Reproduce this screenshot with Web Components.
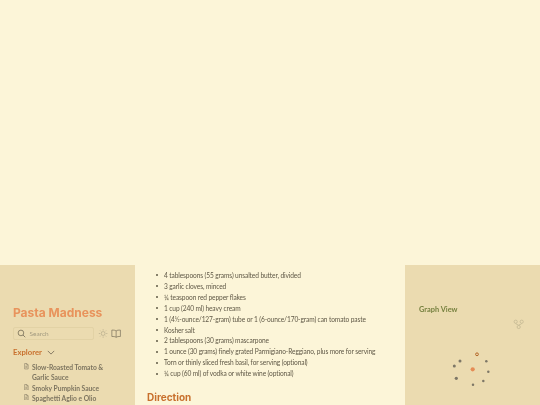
<!DOCTYPE html>
<html lang="en"><head><meta charset="utf-8"><title>Pasta Madness</title>
<style>html,body{margin:0;padding:0;background:#fcf5d8;overflow:hidden;height:405px}</style></head>
<body>
<quartz-page>
  <quartz-left slot="left"></quartz-left>
  <quartz-article slot="center"></quartz-article>
  <quartz-right slot="right"></quartz-right>
</quartz-page>
<script>
const def=(n,html)=>customElements.define(n,class extends HTMLElement{constructor(){super();this.attachShadow({mode:'open'}).innerHTML=html}});
def('quartz-page',`<style>:host{display:block;height:405px;overflow:hidden;background:#fcf5d8;font-family:"Lato","Liberation Sans",sans-serif}
.wrap{padding-top:265px;height:140px}.g{display:grid;grid-template-columns:135px 270px 135px;height:140px;filter:blur(.3px)}</style>
<div class="wrap"><div class="g"><slot name="left"></slot><slot name="center"></slot><slot name="right"></slot></div></div>`);
const file=`<svg viewBox="0 0 24 24" width="6.500" height="6.500" fill="none" stroke="#7c745f" stroke-width="2"><path d="M6 2h8l5 5v15H6z"/><path d="M14 2v5h5M9 12h7M9 16h7"/></svg>`;
def('quartz-left',`<style>:host{display:block;background:#ebdbb0;height:140px;overflow:hidden;box-sizing:border-box;padding:41px 14px 0 13px}
h1{margin:0;font:700 12px/14px "Inter","Liberation Sans",sans-serif;color:#e8935c}
.s{display:flex;align-items:center;margin-top:7px}
.box{flex:none;display:flex;align-items:center;gap:3.500px;width:81px;height:13px;box-sizing:border-box;border:1px solid #e2d2a5;border-radius:2px;padding-left:3px;font-size:6.500px;color:#a29a80}
.sun{margin-left:3.500px}.book{margin-left:3px}
h2{display:flex;align-items:center;gap:5px;margin:6px 0 0;font:700 7.700px/12px "Lato",sans-serif;color:#c8702d}
ul{list-style:none;margin:4px 0 0;padding:0 0 0 10px}
li{display:flex;gap:2.500px;font-size:6.700px;font-weight:700;line-height:10.300px;color:#7c745f}
li span{width:80px}
li svg{flex:none;margin-top:1px}</style>
<h1>Pasta Madness</h1>
<div class="s"><div class="box"><svg viewBox="0 0 24 24" width="9" height="9" fill="none" stroke="#5f5846" stroke-width="1.800"><circle cx="10.500" cy="10.500" r="7.500"/><path d="M16 16l6 6"/></svg>Search</div>
<svg class="sun" viewBox="0 0 24 24" width="11" height="11" fill="none" stroke="#a89f83" stroke-width="1.300"><circle cx="12" cy="12" r="4.500"/><path d="M12 2v3M12 19v3M2 12h3M19 12h3M5 5l2 2M17 17l2 2M5 19l2-2M17 7l2-2"/></svg>
<svg class="book" viewBox="0 0 24 24" width="11" height="11" fill="none" stroke="#6d6553" stroke-width="1.500"><path d="M12 6C10 4 6 4 2 4v15c4 0 8 0 10 2 2-2 6-2 10-2V4c-4 0-8 0-10 2zM12 6v15"/></svg></div>
<h2>Explorer <svg viewBox="0 0 10 6" width="8" height="5" fill="none" stroke="#6d6553" stroke-width="1"><path d="M1 1l4 4 4-4"/></svg></h2>
<ul><li>${file}<span>Slow-Roasted Tomato &amp; Garlic Sauce</span></li><li>${file}<span>Smoky Pumpkin Sauce</span></li><li>${file}<span>Spaghetti Aglio e Olio</span></li></ul>`);
def('quartz-article',`<style>:host{display:block;background:#fcf5d8;height:140px;overflow:hidden;box-sizing:border-box;padding:5px 12px 0}
ul{list-style:none;margin:0;padding:0 0 0 9px;font-size:6.600px;letter-spacing:-.11px;line-height:10.900px;color:#5f5846;white-space:nowrap}
li{display:flex;align-items:center;gap:6px}
li::before{content:"";flex:none;width:2px;height:2px;border-radius:50%;background:#5f5846}
h2{margin:12px 0 0;font:700 10px/13px "Inter","Liberation Sans",sans-serif;color:#c8702d}</style>
<ul><li>4 tablespoons (55 grams) unsalted butter, divided</li><li>3 garlic cloves, minced</li><li>¼ teaspoon red pepper flakes</li><li>1 cup (240 ml) heavy cream</li><li>1 (4½-ounce/127-gram) tube or 1 (6-ounce/170-gram) can tomato paste</li><li>Kosher salt</li><li>2 tablespoons (30 grams) mascarpone</li><li>1 ounce (30 grams) finely grated Parmigiano-Reggiano, plus more for serving</li><li>Torn or thinly sliced fresh basil, for serving (optional)</li><li>¼ cup (60 ml) of vodka or white wine (optional)</li></ul>
<h2>Direction</h2>`);
def('quartz-right',`<style>:host{display:block;background:#ebdbb0;height:140px;overflow:hidden;box-sizing:border-box;padding:39px 0 0 14px}
h3{margin:0;font:700 7.400px/11px "Lato",sans-serif;color:#76803f}
.c{margin:0 0 0 -14px;height:90px;display:block}</style>
<h3>Graph View</h3>
<svg class="c" viewBox="0 0 135 90" width="135" height="90">
<g fill="none" stroke="#c4b993" stroke-width=".8"><circle cx="110.700" cy="6.700" r="1.600"/><circle cx="116.700" cy="6.700" r="1.600"/><circle cx="113.700" cy="12" r="1.600"/><path d="M110.700 8.300c0 1.500 3 1 3 2.100M116.700 8.300c0 1.500-3 1-3 2.100"/></g>
<circle cx="72" cy="39.300" r="1.400" fill="none" stroke="#b5682a" stroke-width="1"/>
<circle cx="67.700" cy="54.300" r="2.100" fill="#e58c55"/>
<g fill="#7d7767"><circle cx="55" cy="46" r="1.500"/><circle cx="49.300" cy="51" r="1.500"/><circle cx="81.300" cy="46.300" r="1.250"/><circle cx="83.300" cy="56.700" r="1.250"/><circle cx="51.300" cy="63.300" r="1.600"/><circle cx="78.300" cy="66" r="1.250"/><circle cx="68" cy="69.700" r="1.250"/></g></svg>`);
</script>
</body></html>
